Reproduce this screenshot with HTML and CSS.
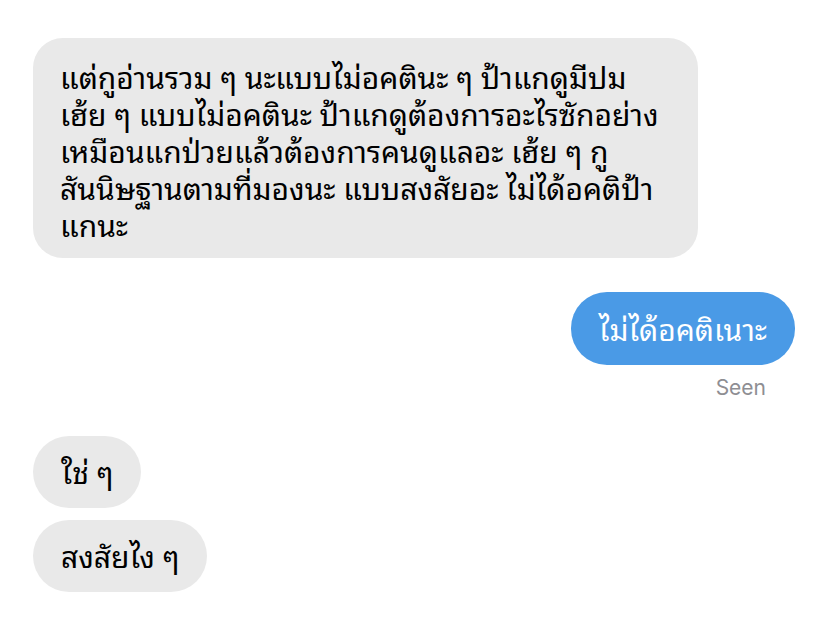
FILE: index.html
```html
<!DOCTYPE html>
<html lang="th">
<head>
<meta charset="utf-8">
<link rel="stylesheet" href="styles.css">
</head>
<body>
<div class="chat">
  <div class="bubble in big">แต่กูอ่านรวม ๆ นะแบบไม่อคตินะ ๆ ป้าแกดูมีปม<br>เฮ้ย ๆ แบบไม่อคตินะ ป้าแกดูต้องการอะไรซักอย่าง<br>เหมือนแกป่วยแล้วต้องการคนดูแลอะ เฮ้ย ๆ กู<br>สันนิษฐานตามที่มองนะ แบบสงสัยอะ ไม่ได้อคติป้า<br>แกนะ</div>
  <div class="out-group">
    <div class="bubble out">ไม่ได้อคติเนาะ</div>
    <div class="seen">Seen</div>
  </div>
  <div class="in-group">
    <div class="bubble in short">ใช่ ๆ</div>
    <div class="bubble in short">สงสัยไง ๆ</div>
  </div>
</div>
</body>
</html>
```
FILE: styles.css
```css
html, body {
  margin: 0;
  padding: 0;
  background: #ffffff;
}
body {
  width: 828px;
  height: 624px;
  overflow: hidden;
  font-family: "Noto Sans Thai Looped", "Noto Sans Thai", "Noto Sans", sans-serif;
}
.chat {
  display: flex;
  flex-direction: column;
  padding: 38px 33px 0 33px;
}
.bubble {
  font-size: 30px;
  line-height: 37px;
  border-radius: 36px;
  box-sizing: border-box;
}
.in {
  background: #e9e9e9;
  color: #000000;
  align-self: flex-start;
}
.big {
  width: 665px;
  height: 220px;
  padding: 19px 27px;
  border-radius: 30px;
}
.out-group {
  display: flex;
  flex-direction: column;
  align-items: flex-end;
  margin-top: 34px;
}
.out {
  background: #4a9ae6;
  color: #ffffff;
  height: 73px;
  padding: 17px 28px;
}
.seen {
  margin-top: 9px;
  margin-right: 29px;
  font-family: "Inter", "Liberation Sans", sans-serif;
  font-size: 21px;
  line-height: 28px;
  color: #8e8e93;
}
.in-group {
  display: flex;
  flex-direction: column;
  align-items: flex-start;
  gap: 12px;
  margin-top: 34px;
}
.short {
  height: 72px;
  padding: 16px 28px;
}
```
